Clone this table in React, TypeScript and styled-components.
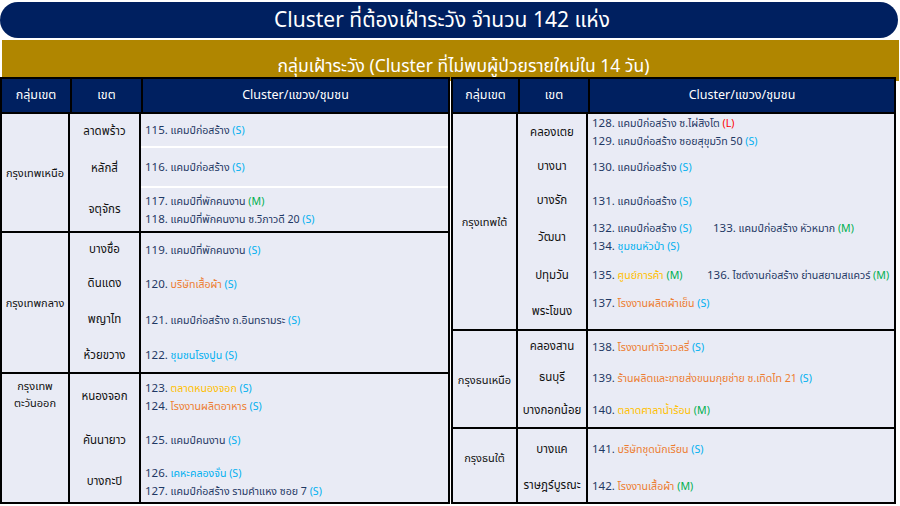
import { Fragment } from "react";
import styled, { createGlobalStyle } from "styled-components";

const colors = {
  navy: "#002060",
  gold: "#B08600",
  body: "#E9EBF5",
  ink: "#1F3864",
  label: "#111111",
  cyan: "#00B0F0",
  green: "#00B050",
  red: "#FF0000",
  orange: "#ED7D31",
  yellow: "#FFC000",
};

type Tone = "ink" | "cyan" | "orange" | "yellow";
type Size = "S" | "M" | "L";

type Item = { no: number; name: string; tone?: Tone; size: Size; w?: number };
type Row = { district: string; h: number; lines: Item[][]; shift?: number };
type Group = { name: string[]; rows: Row[]; top?: boolean; lift?: number; divided?: boolean };

const sizeColor: Record<Size, string> = { S: colors.cyan, M: colors.green, L: colors.red };

const Global = createGlobalStyle`
  body {
    margin: 0;
    background: #ffffff;
    font-family: "Noto Sans", "Noto Sans Thai", "Liberation Sans", sans-serif;
  }
`;

const Page = styled.div`
  width: 900px;
  height: 506px;
  overflow: hidden;
  display: flex;
  flex-direction: column;
  padding-top: 2px;
  box-sizing: border-box;
`;

const Title = styled.div`
  width: 898px;
  height: 36px;
  border-radius: 18px;
  background: ${colors.navy};
  color: #ffffff;
  font-size: 21px;
  display: flex;
  align-items: center;
  justify-content: center;
  padding-right: 14px;
  box-sizing: border-box;
`;

const Band = styled.div`
  margin: 2px 1px 0 2px;
  height: 41px;
  background: ${colors.gold};
  color: #ffffff;
  font-size: 17.5px;
  display: flex;
  align-items: flex-end;
  justify-content: center;
  padding: 0 0 1px 26px;
  box-sizing: border-box;
`;

const Tables = styled.div`
  display: flex;
  gap: 1px;
  margin-top: -4px;
`;

const Table = styled.div<{ $w: number; $c1: number; $c2: number }>`
  width: ${(p) => p.$w}px;
  border: 2px solid #000;
  box-sizing: border-box;
  background: ${colors.body};
  --cols: ${(p) => `${p.$c1}px ${p.$c2}px 1fr`};
`;

const Head = styled.div`
  display: grid;
  grid-template-columns: var(--cols);
  height: 33px;
  background: ${colors.navy};
`;

const HeadCell = styled.div`
  color: #ffffff;
  font-size: 12.5px;
  display: flex;
  align-items: center;
  justify-content: center;
  & + & {
    border-left: 2px solid #000;
  }
`;

const GroupBox = styled.div<{ $rows: string }>`
  display: grid;
  grid-template-columns: var(--cols);
  grid-template-rows: ${(p) => p.$rows};
  border-top: 2px solid #000;
`;

const ZoneCell = styled.div<{ $span: number; $top?: boolean; $lift?: number }>`
  grid-column: 1;
  grid-row: 1 / span ${(p) => p.$span};
  border-right: 2px solid #000;
  display: flex;
  flex-direction: column;
  align-items: center;
  justify-content: ${(p) => (p.$top ? "flex-start" : "center")};
  padding-top: ${(p) => (p.$top ? "3px" : "0")};
  padding-bottom: ${(p) => p.$lift ?? 0}px;
  font-size: 11px;
  line-height: 17px;
  color: ${colors.label};
`;

const DistrictCell = styled.div<{ $row: number }>`
  grid-column: 2;
  grid-row: ${(p) => p.$row};
  border-right: 2px solid #000;
  display: flex;
  align-items: center;
  justify-content: center;
  font-size: 11.5px;
  color: ${colors.label};
`;

const ListCell = styled.div<{ $row: number; $divided?: boolean; $shift?: number }>`
  grid-column: 3;
  grid-row: ${(p) => p.$row};
  display: flex;
  flex-direction: column;
  justify-content: center;
  padding-left: 4px;
  padding-bottom: ${(p) => p.$shift ?? 0}px;
  border-bottom: ${(p) => (p.$divided ? "2px solid #ffffff" : "none")};
  font-size: 10.6px;
  line-height: 18px;
  color: ${colors.ink};
  white-space: nowrap;
`;

const Line = styled.div`
  display: flex;
`;

const Entry = styled.span<{ $w?: number }>`
  display: inline-block;
  width: ${(p) => (p.$w ? `${p.$w}px` : "auto")};
`;

const Num = styled.span`
  font-size: 11.5px;
`;

const Tint = styled.span<{ $c: string }>`
  color: ${(p) => p.$c};
`;

const left: Group[] = [
  {
    name: ["กรุงเทพเหนือ"],
    divided: true,
    rows: [
      { district: "ลาดพร้าว", h: 34, lines: [[{ no: 115, name: "แคมป์ก่อสร้าง", size: "S" }]] },
      { district: "หลักสี่", h: 40, lines: [[{ no: 116, name: "แคมป์ก่อสร้าง", size: "S" }]] },
      {
        district: "จตุจักร",
        h: 43,
        lines: [
          [{ no: 117, name: "แคมป์ที่พักคนงาน", size: "M" }],
          [{ no: 118, name: "แคมป์ที่พักคนงาน ซ.วิภาวดี 20", size: "S" }],
        ],
      },
    ],
  },
  {
    name: ["กรุงเทพกลาง"],
    rows: [
      { district: "บางซื่อ", h: 33, lines: [[{ no: 119, name: "แคมป์ที่พักคนงาน", size: "S" }]] },
      { district: "ดินแดง", h: 35, lines: [[{ no: 120, name: "บริษัทเสื้อผ้า", tone: "orange", size: "S" }]] },
      { district: "พญาไท", h: 37, lines: [[{ no: 121, name: "แคมป์ก่อสร้าง ถ.อินทรามระ", size: "S" }]] },
      { district: "ห้วยขวาง", h: 34, lines: [[{ no: 122, name: "ชุมชนโรงปูน", tone: "cyan", size: "S" }]] },
    ],
  },
  {
    name: ["กรุงเทพ", "ตะวันออก"],
    top: true,
    rows: [
      {
        district: "หนองจอก",
        h: 45,
        lines: [
          [{ no: 123, name: "ตลาดหนองจอก", tone: "yellow", size: "S" }],
          [{ no: 124, name: "โรงงานผลิตอาหาร", tone: "orange", size: "S" }],
        ],
      },
      { district: "คันนายาว", h: 42, lines: [[{ no: 125, name: "แคมป์คนงาน", size: "S" }]] },
      {
        district: "บางกะปิ",
        h: 41,
        lines: [
          [{ no: 126, name: "เคหะคลองจั่น", tone: "cyan", size: "S" }],
          [{ no: 127, name: "แคมป์ก่อสร้าง รามคำแหง ซอย 7", size: "S" }],
        ],
      },
    ],
  },
];

const right: Group[] = [
  {
    name: ["กรุงเทพใต้"],
    rows: [
      {
        district: "คลองเตย",
        h: 36,
        lines: [
          [{ no: 128, name: "แคมป์ก่อสร้าง ซ.ไผ่สิงโต", size: "L" }],
          [{ no: 129, name: "แคมป์ก่อสร้าง ซอยสุขุมวิท 50", size: "S" }],
        ],
      },
      { district: "บางนา", h: 33, lines: [[{ no: 130, name: "แคมป์ก่อสร้าง", size: "S" }]] },
      { district: "บางรัก", h: 35, lines: [[{ no: 131, name: "แคมป์ก่อสร้าง", size: "S" }]] },
      {
        district: "วัฒนา",
        h: 38,
        lines: [
          [
            { no: 132, name: "แคมป์ก่อสร้าง", size: "S", w: 121 },
            { no: 133, name: "แคมป์ก่อสร้าง หัวหมาก", size: "M" },
          ],
          [{ no: 134, name: "ชุมชนหัวป่า", tone: "cyan", size: "S" }],
        ],
      },
      {
        district: "ปทุมวัน",
        h: 38,
        lines: [
          [
            { no: 135, name: "ศูนย์การค้า", tone: "yellow", size: "M", w: 115 },
            { no: 136, name: "ไซต์งานก่อสร้าง ย่านสยามสแควร์", size: "M" },
          ],
        ],
      },
      {
        district: "พระโขนง",
        h: 35,
        shift: 18,
        lines: [[{ no: 137, name: "โรงงานผลิตผ้าเย็น", tone: "orange", size: "S" }]],
      },
    ],
  },
  {
    name: ["กรุงธนเหนือ"],
    rows: [
      { district: "คลองสาน", h: 31, lines: [[{ no: 138, name: "โรงงานทำจิวเวลรี่", tone: "orange", size: "S" }]] },
      {
        district: "ธนบุรี",
        h: 31,
        lines: [[{ no: 139, name: "ร้านผลิตและขายส่งขนมกุยช่าย ซ.เทิดไท 21", tone: "orange", size: "S" }]],
      },
      { district: "บางกอกน้อย", h: 34, lines: [[{ no: 140, name: "ตลาดศาลาน้ำร้อน", tone: "yellow", size: "M" }]] },
    ],
  },
  {
    name: ["กรุงธนใต้"],
    lift: 16,
    rows: [
      { district: "บางแค", h: 40, lines: [[{ no: 141, name: "บริษัทชุดนักเรียน", tone: "orange", size: "S" }]] },
      { district: "ราษฎร์บูรณะ", h: 33, lines: [[{ no: 142, name: "โรงงานเสื้อผ้า", tone: "orange", size: "M" }]] },
    ],
  },
];

const EntryText = ({ item }: { item: Item }) => (
  <Entry $w={item.w}>
    <Num>{item.no}.</Num> <Tint $c={colors[item.tone ?? "ink"]}>{item.name}</Tint>{" "}
    <Tint $c={sizeColor[item.size]}>({item.size})</Tint>
  </Entry>
);

const GroupBlock = ({ group }: { group: Group }) => (
  <GroupBox $rows={group.rows.map((r) => `${r.h}px`).join(" ")}>
    <ZoneCell $span={group.rows.length} $top={group.top} $lift={group.lift}>
      {group.name.map((n) => (
        <div key={n}>{n}</div>
      ))}
    </ZoneCell>
    {group.rows.map((row, i) => (
      <Fragment key={row.district}>
        <DistrictCell $row={i + 1}>{row.district}</DistrictCell>
        <ListCell $row={i + 1} $divided={group.divided && i < group.rows.length - 1} $shift={row.shift}>
          {row.lines.map((line, j) => (
            <Line key={j}>
              {line.map((item) => (
                <EntryText key={item.no} item={item} />
              ))}
            </Line>
          ))}
        </ListCell>
      </Fragment>
    ))}
  </GroupBox>
);

const ClusterTable = ({ groups, w, c1, c2 }: { groups: Group[]; w: number; c1: number; c2: number }) => (
  <Table $w={w} $c1={c1} $c2={c2}>
    <Head>
      <HeadCell>กลุ่มเขต</HeadCell>
      <HeadCell>เขต</HeadCell>
      <HeadCell>Cluster/แขวง/ชุมชน</HeadCell>
    </Head>
    {groups.map((g) => (
      <GroupBlock key={g.name.join("")} group={g} />
    ))}
  </Table>
);

export default function App() {
  return (
    <>
      <Global />
      <Page>
        <Title>Cluster ที่ต้องเฝ้าระวัง จำนวน 142 แห่ง</Title>
        <Band>กลุ่มเฝ้าระวัง (Cluster ที่ไม่พบผู้ป่วยรายใหม่ใน 14 วัน)</Band>
        <Tables>
          <ClusterTable groups={left} w={450} c1={68} c2={71} />
          <ClusterTable groups={right} w={445} c1={65} c2={70} />
        </Tables>
      </Page>
    </>
  );
}
